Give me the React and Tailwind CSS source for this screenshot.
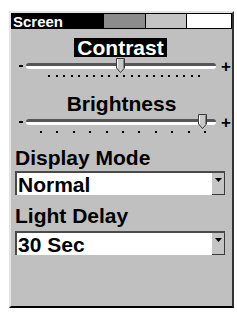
const Thumb = ({ className }) => (
  <svg
    className={`absolute top-[-8px] ${className}`}
    width="9"
    height="15"
    viewBox="0 0 9 15"
  >
    <path d="M0.5 0.5 H8.5 V10 L4.5 14.5 L0.5 10 Z" fill="#c8c8c8" stroke="#3a3a3a" strokeWidth="1" />
    <path d="M1.5 1.5 V9.6" stroke="#ffffff" strokeWidth="1" />
    <path d="M7.5 1.5 V10" stroke="#7a7a7a" strokeWidth="1" />
  </svg>
);

const Slider = ({ thumbClass, dots, dotsClass }) => (
  <div className="flex flex-col">
    <div className="flex h-[14px] items-center">
      <div className="ml-[8px] h-[2px] w-[4px] bg-black" />
      <div className="relative ml-[3px] h-[6px] w-[190px] rounded-full border-t-[3px] border-[#555] bg-white">
        <Thumb className={thumbClass} />
      </div>
      <span className="ml-[5px] text-[17px] font-bold leading-none text-black">+</span>
    </div>
    <div className={`mt-[1px] flex h-[3px] items-center justify-between ${dotsClass}`}>
      {Array.from({ length: dots }).map((_, i) => (
        <div key={i} className="h-[2px] w-[2px] bg-black" />
      ))}
    </div>
  </div>
);

const Dropdown = ({ value }) => (
  <div className="ml-[4px] flex h-[24px] w-[210px] border-l-2 border-t-2 border-[#4a4a4a] bg-white">
    <div className="flex flex-1 items-center pl-[1px] text-[21px] font-bold leading-none text-black">
      {value}
    </div>
    <div className="flex w-[13px] items-start justify-center border-b border-r border-[#3a3a3a] bg-[#c4c4c4] pt-[5px]">
      <svg width="7" height="6" viewBox="0 0 7 6">
        <path d="M0 0 H7 L3.5 4 Z" fill="#000" />
      </svg>
    </div>
  </div>
);

export default function App() {
  return (
    <div className="h-[312px] w-[237px] bg-white pl-[9px] pt-[11px] font-['Liberation_Sans',Arial,sans-serif]">
      <div className="flex h-[297px] w-[225px] flex-col border-b-2 border-l-2 border-r-2 border-t-2 border-b-black border-l-[#e4e4e4] border-r-[#333] border-t-[#e4e4e4] bg-[#c0c0c0]">
        <div className="flex h-[16px] border border-black">
          <div className="flex w-[91px] items-center bg-black pl-[1px] text-[15px] font-bold leading-none text-white">
            Screen
          </div>
          <div className="w-[42px] border-l border-black bg-[#8c8c8c]" />
          <div className="w-[41px] border-l border-black bg-[#c4c4c4]" />
          <div className="flex-1 border-l border-black bg-white" />
        </div>

        <div className="mt-[9px] flex justify-center">
          <div className="ml-[-2px] bg-black px-[3px] text-[21px] font-bold leading-[19px] text-white">
            Contrast
          </div>
        </div>
        <div className="mt-[2px]">
          <Slider thumbClass="left-[90px]" dots={21} dotsClass="ml-[37px] w-[152px]" />
        </div>

        <div className="mt-[17px] text-center text-[21px] font-bold leading-[20px] text-black">
          Brightness
        </div>
        <div className="mt-[1px]">
          <Slider thumbClass="left-[172px]" dots={11} dotsClass="ml-[29px] w-[166px]" />
        </div>

        <div className="ml-[4px] mt-[15px] text-[21px] font-bold leading-[20px] text-black">
          Display Mode
        </div>
        <div className="mt-[3px]">
          <Dropdown value="Normal" />
        </div>

        <div className="ml-[4px] mt-[11px] text-[21px] font-bold leading-[20px] text-black">
          Light Delay
        </div>
        <div className="mt-[5px]">
          <Dropdown value="30 Sec" />
        </div>
      </div>
    </div>
  );
}
